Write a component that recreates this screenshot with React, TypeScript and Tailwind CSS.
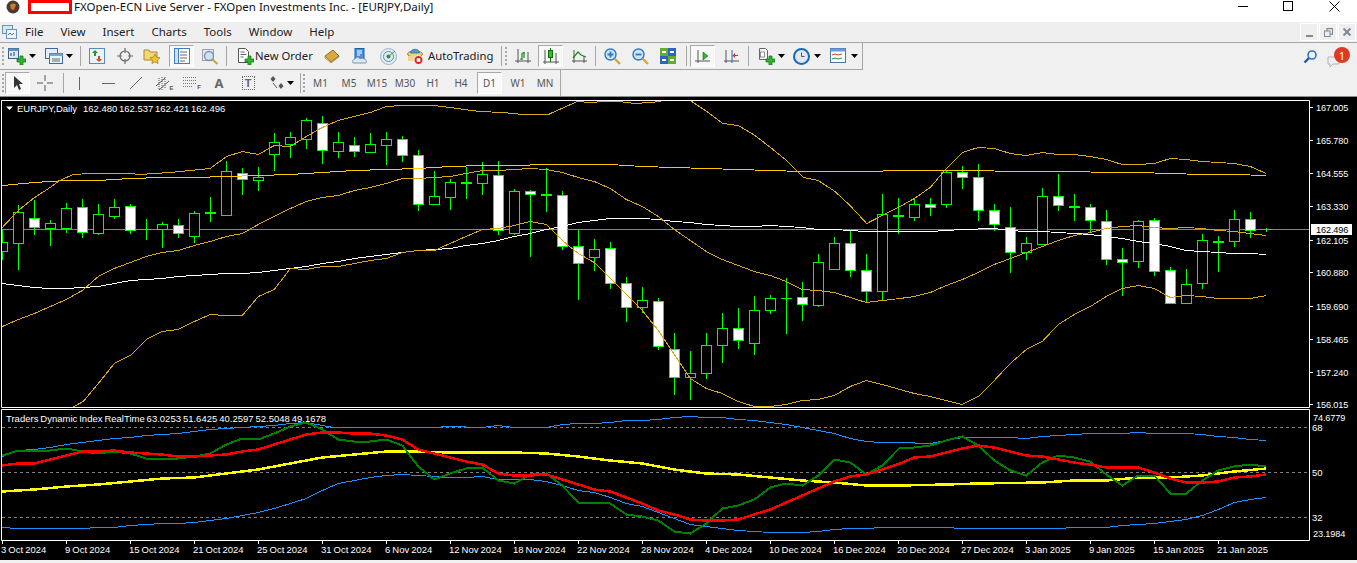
import React from 'react'

// hi, lo, bodyTop, bodyBottom, filled: read off the 3x crops, real y = 100 + v / 3
const candles: [number, number, number, number, number][] = [
  [388, 480, 425, 452, 0], [316, 510, 337, 428, 0], [300, 405, 355, 380, 1], [360, 438, 370, 383, 0],
  [310, 400, 325, 383, 0], [297, 414, 322, 395, 1], [312, 405, 343, 398, 0], [297, 358, 322, 348, 0],
  [312, 402, 319, 389, 1], [358, 420, 388, 388, 1], [366, 444, 373, 388, 0], [358, 414, 376, 398, 1],
  [334, 430, 340, 407, 0], [291, 366, 337, 339, 1], [184, 348, 214, 344, 0], [205, 285, 220, 236, 1],
  [202, 273, 232, 239, 0], [99, 213, 127, 161, 0], [96, 174, 112, 131, 0], [55, 148, 61, 116, 0],
  [48, 192, 70, 149, 1], [96, 174, 127, 152, 0], [111, 171, 136, 152, 1], [99, 156, 133, 155, 0],
  [96, 195, 118, 136, 0], [108, 186, 118, 166, 1], [151, 333, 166, 311, 1], [213, 316, 289, 311, 0],
  [238, 330, 247, 290, 0], [200, 297, 247, 250, 1], [186, 285, 223, 250, 0], [183, 405, 226, 391, 1],
  [267, 405, 274, 398, 0], [270, 470, 274, 281, 1], [205, 336, 281, 284, 1], [273, 450, 286, 439, 1],
  [390, 600, 439, 490, 1], [418, 513, 448, 470, 0], [427, 567, 445, 550, 1], [531, 665, 550, 622, 1],
  [561, 640, 601, 622, 0], [595, 750, 604, 739, 1], [700, 885, 748, 832, 1], [754, 900, 820, 830, 0],
  [700, 837, 736, 820, 0], [640, 789, 685, 736, 0], [625, 747, 685, 721, 1], [589, 765, 631, 730, 0],
  [586, 642, 595, 631, 0], [534, 702, 595, 595, 1], [547, 663, 592, 613, 1], [463, 621, 487, 616, 0],
  [411, 508, 430, 508, 0], [392, 531, 430, 511, 1], [463, 607, 511, 574, 1], [283, 602, 343, 574, 0],
  [295, 402, 346, 349, 1], [295, 363, 313, 352, 0], [295, 348, 313, 320, 1], [211, 323, 216, 313, 0],
  [198, 267, 217, 232, 1], [192, 363, 232, 331, 1], [313, 393, 331, 373, 1], [322, 519, 382, 457, 1],
  [411, 480, 430, 457, 0], [265, 436, 289, 433, 0], [222, 333, 289, 316, 1], [283, 363, 319, 322, 1],
  [313, 398, 322, 361, 1], [331, 495, 364, 478, 1], [445, 588, 478, 487, 1], [361, 504, 364, 484, 0],
  [355, 528, 361, 514, 1], [502, 610, 511, 610, 1], [507, 613, 553, 610, 0], [403, 567, 421, 550, 0],
  [409, 516, 424, 427, 1], [331, 441, 358, 424, 0], [337, 414, 358, 391, 1], [385, 396, 388, 388, 1],
]

// flat x,y lists in crop coordinates, one list per crop. y sits on a pixel centre so flat runs stay visible
const path = (oy: number, parts: [number, number[]][]) => {
  const out: string[] = []
  parts.forEach(([ox, arr]) => {
    for (let i = 0; i < arr.length; i += 2) out.push(`${(ox + arr[i] / 3).toFixed(1)},${Math.floor(oy + arr[i + 1] / 3) + 0.5}`)
  })
  return out.join(' ')
}

const bbUpper = path(100, [
  [0, [7, 383, 55, 330, 100, 295, 150, 262, 175, 245, 199, 232, 220, 222, 270, 220, 390, 220, 420, 224, 510, 216, 630, 205, 680, 170, 727, 154, 775, 163, 823, 137, 871, 140, 919, 110, 967, 82, 1015, 60, 1063, 50, 1111, 38, 1159, 18, 1207, 16, 1303, 16]],
  [450, [0, 23, 88, 33, 160, 37, 220, 43, 295, 43, 355, 15, 382, 4, 420, 8, 460, 5, 505, 5, 555, 9, 600, 6, 630, 3, 680, -20, 725, 3, 770, 35, 818, 69, 865, 77, 915, 105, 965, 145, 1010, 180, 1060, 231, 1105, 240, 1155, 275, 1200, 315, 1250, 370, 1297, 345]],
  [900, [0, 320, 43, 295, 91, 262, 139, 205, 187, 158, 235, 142, 283, 145, 331, 160, 379, 166, 427, 157, 475, 163, 523, 163, 571, 170, 619, 177, 667, 193, 715, 193, 763, 189, 811, 175, 859, 178, 907, 184, 955, 186, 1003, 190, 1051, 198, 1099, 221]],
])
const bbMid = path(100, [
  [0, [7, 678, 55, 657, 103, 640, 151, 620, 199, 598, 247, 570, 295, 530, 343, 505, 391, 488, 439, 470, 487, 457, 535, 450, 583, 436, 631, 424, 679, 408, 727, 400, 775, 372, 823, 350, 871, 325, 919, 305, 967, 293, 1015, 285, 1063, 270, 1111, 262, 1159, 250, 1207, 236, 1255, 235, 1303, 232]],
  [450, [0, 228, 48, 220, 97, 212, 145, 210, 193, 207, 241, 205, 289, 208, 337, 218, 385, 232, 433, 245, 481, 266, 529, 298, 577, 320, 625, 350, 673, 388, 721, 422, 769, 453, 817, 478, 865, 497, 913, 514, 961, 526, 1009, 545, 1057, 567, 1105, 572, 1153, 578, 1201, 592, 1249, 607, 1297, 600]],
  [900, [0, 595, 43, 588, 91, 577, 139, 555, 187, 537, 235, 518, 283, 493, 331, 475, 379, 458, 427, 440, 475, 420, 523, 405, 571, 397, 619, 386, 667, 380, 715, 377, 763, 381, 811, 384, 859, 382, 907, 386, 955, 390, 1003, 393, 1051, 399, 1099, 406]],
])
const bbLower = path(100, [
  [0, [190, 940, 222, 920, 250, 905, 295, 850, 343, 790, 391, 765, 439, 717, 487, 695, 535, 688, 583, 665, 631, 643, 679, 646, 727, 646, 775, 590, 823, 568, 871, 505, 919, 508, 967, 499, 1015, 498, 1063, 490, 1111, 480, 1159, 476, 1207, 456, 1255, 452, 1303, 450]],
  [450, [0, 430, 48, 410, 97, 388, 145, 385, 193, 375, 241, 364, 289, 372, 337, 420, 385, 460, 433, 488, 481, 535, 529, 582, 577, 630, 625, 690, 673, 762, 721, 835, 769, 865, 817, 880, 865, 905, 913, 918, 961, 918, 1009, 912, 1057, 902, 1105, 897, 1153, 885, 1201, 860, 1249, 841, 1297, 852]],
  [900, [0, 868, 43, 880, 91, 888, 139, 902, 187, 913, 235, 890, 283, 840, 331, 790, 379, 748, 427, 723, 475, 672, 523, 644, 571, 618, 619, 590, 667, 566, 715, 555, 763, 566, 811, 592, 859, 586, 907, 590, 955, 595, 1003, 595, 1051, 595, 1099, 586]],
])
const maWhite = path(100, [
  [0, [7, 550, 55, 556, 103, 563, 151, 566, 199, 566, 247, 563, 295, 560, 343, 550, 391, 541, 439, 538, 487, 535, 535, 529, 583, 526, 631, 523, 679, 521, 727, 520, 775, 516, 823, 511, 871, 506, 919, 498, 967, 490, 1015, 484, 1063, 476, 1111, 468, 1159, 462, 1207, 456, 1255, 451, 1303, 448]],
  [450, [0, 445, 48, 436, 97, 430, 145, 421, 193, 410, 241, 400, 289, 388, 337, 378, 385, 368, 433, 360, 481, 356, 529, 355, 577, 355, 625, 358, 673, 364, 721, 367, 769, 372, 817, 376, 865, 379, 913, 379, 961, 376, 1009, 379, 1057, 382, 1105, 388, 1153, 388, 1201, 391, 1249, 394]],
  [900, [0, 394, 91, 394, 139, 391, 187, 388, 283, 385, 331, 391, 379, 394, 427, 394, 475, 397, 523, 400, 571, 403, 619, 409, 667, 415, 715, 423, 763, 430, 811, 440, 859, 451, 907, 454, 955, 457, 1003, 460, 1051, 460, 1099, 463]],
])
const maGold = path(100, [
  [0, [7, 257, 103, 248, 199, 242, 295, 240, 391, 235, 487, 233, 583, 231, 679, 229, 775, 226, 871, 223, 967, 218, 1063, 212, 1159, 208, 1255, 205]],
  [450, [0, 199, 97, 197, 193, 195, 289, 194, 385, 194, 481, 194, 577, 198, 673, 203, 769, 206, 865, 209, 961, 212, 1057, 214, 1153, 213, 1249, 213]],
  [900, [0, 212, 235, 212, 331, 214, 523, 215, 619, 217, 715, 217, 811, 220, 907, 223, 1003, 224, 1099, 227]],
])

const tdiBlueUp = path(405, [
  [0, [7, 153, 55, 137, 103, 133, 151, 126, 199, 118, 247, 112, 295, 105, 343, 100, 391, 96, 439, 92, 487, 88, 535, 84, 583, 80, 631, 74, 679, 70, 727, 67, 775, 65, 823, 60, 871, 55, 919, 52, 967, 60, 1000, 67, 1300, 66]],
  [450, [0, 65, 96, 67, 145, 62, 193, 66, 289, 66, 337, 59, 385, 56, 433, 55, 481, 52, 529, 46, 577, 45, 625, 43, 673, 37, 721, 34, 769, 37, 817, 38, 865, 43, 913, 46, 961, 52, 1009, 59, 1057, 68, 1105, 77, 1153, 86, 1201, 100, 1249, 109, 1297, 112]],
  [900, [0, 113, 91, 116, 139, 106, 187, 98, 283, 98, 331, 97, 379, 100, 427, 95, 475, 90, 523, 87, 571, 85, 667, 85, 715, 82, 763, 85, 859, 85, 907, 88, 955, 94, 1003, 98, 1051, 104, 1099, 106]],
])
const tdiBlueDn = path(405, [
  [0, [7, 368, 55, 371, 247, 371, 295, 368, 343, 367, 391, 361, 439, 358, 487, 356, 535, 355, 583, 351, 631, 346, 679, 340, 727, 331, 775, 323, 823, 310, 871, 295, 919, 280, 967, 255, 1015, 234, 1063, 226, 1111, 217, 1159, 211, 1207, 208, 1255, 211, 1303, 215]],
  [450, [0, 217, 48, 218, 97, 214, 145, 222, 193, 222, 241, 223, 289, 230, 337, 240, 385, 256, 433, 263, 481, 277, 529, 295, 577, 305, 625, 322, 673, 340, 721, 358, 769, 365, 817, 370, 865, 376, 913, 380, 961, 382, 1057, 382, 1105, 380, 1153, 374, 1201, 371, 1249, 371, 1297, 368]],
  [900, [0, 367, 139, 367, 187, 370, 475, 370, 523, 367, 619, 367, 667, 361, 715, 358, 763, 355, 811, 349, 859, 343, 907, 331, 955, 313, 1003, 292, 1051, 282, 1099, 277]],
])
const tdiGreen = path(405, [
  [0, [7, 150, 55, 135, 103, 135, 151, 137, 199, 131, 247, 140, 295, 146, 343, 139, 391, 146, 439, 161, 487, 161, 535, 161, 583, 155, 631, 146, 679, 117, 727, 101, 775, 104, 823, 85, 871, 63, 919, 53, 967, 74, 1015, 103, 1063, 110, 1111, 110, 1159, 104, 1207, 120, 1255, 185, 1303, 222]],
  [450, [0, 205, 48, 191, 97, 188, 145, 226, 193, 236, 241, 208, 289, 205, 337, 240, 385, 293, 433, 293, 481, 296, 529, 329, 577, 333, 625, 346, 673, 379, 721, 386, 769, 355, 817, 310, 865, 301, 913, 283, 961, 247, 1009, 236, 1057, 240, 1105, 212, 1153, 164, 1201, 171, 1249, 208, 1297, 180]],
  [900, [0, 128, 43, 128, 91, 122, 139, 105, 187, 93, 235, 122, 283, 165, 331, 197, 379, 210, 427, 172, 475, 152, 523, 156, 571, 168, 619, 207, 667, 240, 715, 211, 763, 211, 811, 266, 859, 266, 907, 226, 955, 196, 1003, 183, 1051, 179, 1099, 183]],
])
const tdiRed = path(405, [
  [0, [7, 180, 55, 176, 103, 176, 151, 163, 199, 150, 247, 138, 295, 138, 343, 137, 391, 143, 439, 146, 487, 148, 535, 153, 583, 153, 631, 152, 679, 147, 727, 138, 775, 132, 823, 118, 871, 103, 919, 87, 967, 83, 1015, 83, 1063, 84, 1111, 85, 1159, 91, 1207, 102, 1255, 132, 1303, 145]],
  [450, [0, 156, 48, 168, 97, 177, 145, 205, 193, 212, 241, 210, 289, 209, 337, 222, 385, 238, 433, 254, 481, 259, 529, 276, 577, 294, 625, 315, 673, 329, 721, 344, 769, 347, 817, 345, 865, 343, 913, 329, 961, 312, 1009, 293, 1057, 272, 1105, 251, 1153, 230, 1201, 214, 1249, 208, 1297, 194]],
  [900, [0, 176, 43, 158, 91, 153, 139, 143, 187, 130, 235, 122, 283, 128, 331, 139, 379, 151, 427, 154, 475, 163, 523, 172, 571, 177, 619, 187, 667, 188, 715, 188, 763, 202, 811, 221, 859, 233, 907, 233, 955, 229, 1003, 216, 1051, 215, 1099, 209]],
])
const tdiYellow = path(405, [
  [0, [7, 258, 103, 254, 199, 244, 295, 238, 391, 229, 487, 220, 583, 217, 679, 205, 775, 193, 871, 175, 967, 158, 1063, 148, 1159, 138, 1255, 138]],
  [450, [0, 141, 193, 143, 289, 145, 385, 154, 481, 167, 577, 176, 673, 192, 769, 204, 865, 209, 961, 218, 1057, 226, 1153, 232, 1249, 240]],
  [900, [0, 240, 139, 237, 235, 234, 427, 232, 523, 227, 619, 225, 715, 218, 811, 216, 907, 212, 1003, 200, 1099, 191]],
])

const prices: [string, number][] = [
  ['167.005', 107], ['165.780', 140], ['164.555', 173], ['163.330', 206], ['162.105', 240],
  ['160.880', 272], ['159.690', 306], ['158.465', 339], ['157.240', 372], ['156.015', 404],
]
const dates = ['3 Oct 2024', '9 Oct 2024', '15 Oct 2024', '21 Oct 2024', '25 Oct 2024', '31 Oct 2024', '6 Nov 2024', '12 Nov 2024', '18 Nov 2024', '22 Nov 2024', '28 Nov 2024', '4 Dec 2024', '10 Dec 2024', '16 Dec 2024', '20 Dec 2024', '27 Dec 2024', '3 Jan 2025', '9 Jan 2025', '15 Jan 2025', '21 Jan 2025']

const Arrow = () => (
  <svg width="7" height="4" viewBox="0 0 7 4" className="shrink-0"><path d="M0 0h7L3.5 4z" fill="#000" /></svg>
)
const Grip = () => <div className="h-[18px] border-l-2 border-dotted border-[#a8a8a8]" />
const Sep = () => <div className="h-[20px] w-px bg-[#a6a6a6]" />

const Tool = ({ w, children }: { w: string; children?: React.ReactNode }) => (
  <div className={`${w} h-full flex items-center justify-center shrink-0`}>{children}</div>
)
const Pressed = ({ children }: { children: React.ReactNode }) => (
  <div className="w-[25px] h-[22px] flex items-center justify-center bg-[#f8f8f8] border border-t-[#a8a8a8] border-l-[#a8a8a8] border-r-white border-b-white">{children}</div>
)

// toolbar icons
const Plus = () => <path d="M9 12h3V9h3v3h3v3h-3v3h-3v-3H9z" fill="#2fb52f" stroke="#0d6b0d" strokeWidth="0.7" />
const NewChart = () => (
  <svg width="18" height="18" viewBox="0 0 18 18"><rect x="0.5" y="1.5" width="10" height="10" fill="#dbe8f6" stroke="#3f5f8a" /><rect x="0.5" y="1.5" width="10" height="2.5" fill="#5f8fc8" /><path d="M3 9V6M6 9V5" stroke="#345" /><Plus /></svg>
)
const Profiles = () => (
  <svg width="18" height="18" viewBox="0 0 18 18"><rect x="0.5" y="1.5" width="12" height="10" fill="#e4eef9" stroke="#3f6a9e" /><rect x="4.5" y="6.5" width="13" height="10" fill="#eef4fb" stroke="#3f6a9e" /><rect x="4.5" y="6.5" width="13" height="2.5" fill="#7aa3d4" /><path d="M7 12h8M7 14h8" stroke="#345" strokeWidth="0.8" /></svg>
)
const MarketWatch = () => (
  <svg width="16" height="16" viewBox="0 0 16 16"><rect x="0.5" y="0.5" width="15" height="15" fill="#eaf2fb" stroke="#5a8ac0" /><path d="M6 2 3 5h2v3h2V5h2z" fill="#1f9a2c" /><path d="M10 14l3-3h-2V8H9v3H7z" fill="#d84a1f" /></svg>
)
const DataWindow = () => (
  <svg width="16" height="16" viewBox="0 0 16 16" fill="none" stroke="#6a6a6a" strokeWidth="1.2"><circle cx="8" cy="8" r="5" /><path d="M8 0v5M8 11v5M0 8h5M11 8h5" /></svg>
)
const Navigator = () => (
  <svg width="18" height="18" viewBox="0 0 18 18"><path d="M1 3h5l1 2h7v8H1z" fill="#f5d676" stroke="#a9892c" /><path d="M12 7l1.6 3.2 3.4.5-2.5 2.4.6 3.4-3.1-1.6-3.1 1.6.6-3.4L7 10.700l3.400-.5z" fill="#f3c430" stroke="#9a7a18" strokeWidth="0.7" /></svg>
)
const Terminal = () => (
  <svg width="16" height="16" viewBox="0 0 16 16"><rect x="0.5" y="0.5" width="15" height="15" fill="#fff" stroke="#3f7ec2" /><rect x="0.5" y="0.5" width="4" height="15" fill="#cfe2f6" stroke="#3f7ec2" /><path d="M6 4h7M6 7h7M6 10h7M6 13h5" stroke="#667" /></svg>
)
const Tester = () => (
  <svg width="18" height="18" viewBox="0 0 18 18" fill="none"><rect x="1.500" y="2.500" width="11" height="11" fill="#e6e9ee" stroke="#9aa3ad" /><circle cx="8" cy="9" r="4.500" fill="#cfe3f5" stroke="#7d8fa3" strokeWidth="1.300" /><path d="M11.500 12.500l5 4.500" stroke="#c9a43a" strokeWidth="2" /></svg>
)
const NewOrder = () => (
  <svg width="18" height="18" viewBox="0 0 18 18"><path d="M2.500 1.500h7l3 3v11h-10z" fill="#fff" stroke="#555" /><path d="M4.500 5h4M4.500 7.500h6M4.500 10h3" stroke="#667" /><Plus /></svg>
)
const Book = () => (
  <svg width="16" height="16" viewBox="0 0 16 16"><path d="M1 8 9 2l6 6-8 6z" fill="#d9a93f" stroke="#8a6a20" /><path d="M1 8v2l6 5 8-6V8l-8 6z" fill="#f0dfae" stroke="#8a6a20" strokeWidth="0.6" /></svg>
)
const Cloud = () => (
  <svg width="16" height="16" viewBox="0 0 16 16"><rect x="3" y="0.500" width="9" height="10" fill="#4a90d8" stroke="#1f5fa8" /><path d="M5 3h5M5 5h5M5 7h3" stroke="#fff" /><path d="M1 15c-1-2 0-4 2-4 1-2 4-2 5 0 1-1 3-1 4 0 2 0 3 2 2 4z" fill="#dce8f3" stroke="#7c97b3" /></svg>
)
const Radar = () => (
  <svg width="17" height="17" viewBox="0 0 17 17" fill="none"><circle cx="8.500" cy="8.500" r="8" fill="#dfeaf3" stroke="#9fb4c6" /><circle cx="8.500" cy="8.500" r="5" stroke="#5f93bd" /><circle cx="8.500" cy="8.500" r="2" fill="#2d8f3a" /><path d="M8.500 8.500 15 3" stroke="#3aa04a" /></svg>
)
const AutoTradingIcon = () => (
  <svg width="16" height="17" viewBox="0 0 16 17"><ellipse cx="8" cy="6" rx="7.500" ry="3" fill="#f2d37a" stroke="#a2802c" /><path d="M3.500 5c0-5 9-5 9 0z" fill="#4f9ad6" stroke="#27679e" strokeWidth="0.7" /><path d="M1 8h10v5H1z" fill="#f4d68a" /><circle cx="11.500" cy="12" r="4.500" fill="#d8241c" stroke="#fff" /><rect x="9.700" y="10.200" width="3.600" height="3.600" fill="#fff" /></svg>
)
const BarIcon = () => (
  <svg width="16" height="16" viewBox="0 0 16 16" fill="none"><path d="M3 1v14M0 13h16M13 4v11" stroke="#555" /><path d="M7 12V5M7 11H5M7 5h3M9 4v6" stroke="#1c8a1c" strokeWidth="1.200" /></svg>
)
const CandleIcon = () => (
  <svg width="16" height="18" viewBox="0 0 16 18" fill="none"><path d="M2 3v14M0 15h16M13 6v11" stroke="#555" /><path d="M7.500 1v14" stroke="#116b11" /><rect x="5.500" y="3.500" width="4" height="7" fill="#28c428" stroke="#116b11" /></svg>
)
const LineIcon = () => (
  <svg width="15" height="16" viewBox="0 0 15 16" fill="none"><path d="M2 2v13M0 13h15M12 8v7" stroke="#555" /><path d="M1 10l5-6 3 3 5 2" stroke="#1c8a1c" strokeWidth="1.200" /></svg>
)
const Zoom = ({ plus }: { plus?: boolean }) => (
  <svg width="17" height="17" viewBox="0 0 17 17" fill="none"><circle cx="6.500" cy="6.500" r="5.500" fill="#cfe4f7" stroke="#2f78bd" strokeWidth="1.400" /><path d={plus ? 'M3.500 6.500h6M6.500 3.500v6' : 'M3.500 6.500h6'} stroke="#2f78bd" strokeWidth="1.800" /><path d="M10.500 10.500l5.500 5.500" stroke="#cfa93f" strokeWidth="2.400" /></svg>
)
const Tile = () => (
  <svg width="16" height="16" viewBox="0 0 16 16"><rect y="0" width="8" height="8" fill="#5fae2e" /><rect x="8" y="0" width="8" height="8" fill="#2f62c2" /><rect y="8" width="8" height="8" fill="#2f62c2" /><rect x="8" y="8" width="8" height="8" fill="#5fae2e" /><path d="M2 3h4v2H2zM10 3h4v2h-4zM2 11h4v2H2zM10 11h4v2h-4z" fill="#fff" /></svg>
)
const AutoScroll = () => (
  <svg width="15" height="16" viewBox="0 0 15 16" fill="none"><path d="M3 2v13M0 13h15" stroke="#555" /><path d="M8 4l5 4-5 4z" fill="#37b537" stroke="#116b11" strokeWidth="0.6" /></svg>
)
const ChartShift = () => (
  <svg width="15" height="16" viewBox="0 0 15 16" fill="none"><path d="M2 2v13M0 13h15" stroke="#555" /><path d="M8 2v13" stroke="#2a62b8" /><path d="M14 7H11V5L8.500 7.500 11 10V8h3z" fill="#c8331e" /></svg>
)
const Indicators = () => (
  <svg width="18" height="18" viewBox="0 0 18 18"><path d="M2.500 1.500h6l2 2v9h-8z" fill="#f3f3f3" stroke="#666" /><rect x="3.500" y="5" width="4" height="5" fill="#fff" stroke="#666" strokeWidth="0.7" /><Plus /></svg>
)
const Clock = () => (
  <svg width="17" height="17" viewBox="0 0 17 17" fill="none"><circle cx="8.500" cy="8.500" r="7.500" fill="#dfe8f2" stroke="#1668b8" strokeWidth="2" /><path d="M8.500 4.500v4h3" stroke="#555" /></svg>
)
const Template = () => (
  <svg width="16" height="16" viewBox="0 0 16 16" fill="none"><rect x="0.500" y="0.500" width="15" height="14" fill="#fff" stroke="#4a74a8" /><rect x="0.500" y="0.500" width="15" height="3" fill="#6f9ad0" /><path d="M2 7l3-1 3 1 4-1" stroke="#c9402a" /><path d="M2 11l3-1 3 1 4-1" stroke="#2d8f3a" /></svg>
)
const Cursor = () => (
  <svg width="12" height="16" viewBox="0 0 12 16"><path d="M2 1v12l3-3 2 5 2-1-2-5h4z" fill="#333" /></svg>
)
const Cross = () => (
  <svg width="16" height="16" viewBox="0 0 16 16" stroke="#555"><path d="M8 0v6M8 10v6M0 8h6M10 8h6" /></svg>
)
const VLine = () => <div className="w-px h-[13px] bg-[#666]" />
const HLine = () => <div className="w-[13px] h-px bg-[#666]" />
const Trend = () => (
  <svg width="14" height="14" viewBox="0 0 14 14" stroke="#666" fill="none"><path d="M1 13 13 1" /></svg>
)
const Channel = () => (
  <div className="flex items-end">
    <svg width="13" height="15" viewBox="0 0 13 15" stroke="#555" fill="none"><path d="M0 10 9 2M3 14 13 5" /><path d="M3 2v12M6 1v13M9 1v12" strokeDasharray="1 1" /></svg>
    <span className="font-['Liberation_Sans',sans-serif] text-[6px] font-bold leading-none text-[#555]">E</span>
  </div>
)
const Fibo = () => (
  <div className="flex items-end">
    <svg width="14" height="14" viewBox="0 0 14 14" stroke="#777" strokeDasharray="1 1"><path d="M0 1.500h14M0 4.500h14M0 7.500h14M0 10.500h10" /></svg>
    <span className="font-['Liberation_Sans',sans-serif] text-[6px] font-bold leading-none text-[#555]">F</span>
  </div>
)
const TextBox = () => (
  <div className="w-[13px] h-[14px] flex items-center justify-center border border-dotted border-[#666] font-['Liberation_Sans',sans-serif] text-[11px] font-bold leading-none text-[#666]">T</div>
)
const Shapes = () => (
  <svg width="14" height="14" viewBox="0 0 14 14" fill="#555"><path d="M3 0l2.500 3L3 6 .5 3z" /><path d="M11 7l2.500 3L11 13 8.500 10z" /><path d="M3 7l4 5" stroke="#555" fill="none" /></svg>
)

const labelFont = "'Liberation Sans', sans-serif"
const uiFont = "font-['Noto_Sans','Liberation_Sans',sans-serif]"

const Chart = () => (
  <svg width="1357" height="463" viewBox="0 97 1357 463" className="block" fontFamily={labelFont} fontSize="9.5">
    <defs>
      <clipPath id="mainPane"><rect x="2" y="101" width="1307" height="306" /></clipPath>
      <clipPath id="tdiPane"><rect x="2" y="410" width="1307" height="130" /></clipPath>
    </defs>
    <rect x="0" y="97" width="1357" height="463" fill="#000" />

    <g clipPath="url(#mainPane)">
      <rect x="2" y="229" width="1307" height="1" fill="#808890" />
      {candles.map(([hi, lo, top, bot, filled], i) => {
        const cx = 2 + 16 * i
        const y = (v: number) => Math.round(100 + v / 3)
        const t = y(top)
        const b = Math.max(y(bot), t)
        return (
          <g key={i}>
            <rect x={cx} y={y(hi)} width="1" height={y(lo) - y(hi)} fill="#00ff00" />
            <rect x={cx - 5} y={t} width="11" height={b - t + 1} fill="#00ff00" />
            {b - t > 1 && <rect x={cx - 4} y={t + 1} width="9" height={b - t - 1} fill={filled ? '#fff' : '#000'} />}
          </g>
        )
      })}
      <g fill="none" shapeRendering="crispEdges">
        <polyline points={maGold} stroke="#ffc800" strokeWidth="1" />
        <polyline points={maWhite} stroke="#fff" strokeWidth="1" />
        <polyline points={bbUpper} stroke="#daa520" strokeWidth="1" />
        <polyline points={bbMid} stroke="#daa520" strokeWidth="1" />
        <polyline points={bbLower} stroke="#daa520" strokeWidth="1" />
      </g>
    </g>

    <g clipPath="url(#tdiPane)" fill="none">
      <g stroke="#808080" strokeDasharray="3 3">
        <path d="M2 427.500H1309M2 472.500H1309M2 517.500H1309" />
      </g>
      <g shapeRendering="crispEdges">
        <polyline points={tdiBlueUp} stroke="#1e90ff" strokeWidth="1" />
        <polyline points={tdiBlueDn} stroke="#1e90ff" strokeWidth="1" />
        <polyline points={tdiYellow} stroke="#ffff00" strokeWidth="2.500" />
        <polyline points={tdiGreen} stroke="#008000" strokeWidth="2" />
        <polyline points={tdiRed} stroke="#ff0000" strokeWidth="2.500" />
      </g>
    </g>

    <path d="M1.500 100.500H1309.500V407.500H1.500zM1.500 409.500H1309.500V540.500H1.500z" fill="none" stroke="#fff" />

    <path d="M6 106.500h7l-3.500 3.500z" fill="#fff" />
    <text x="17" y="111.500" fill="#fff">EURJPY,Daily</text>
    <text x="83" y="111.500" fill="#fff" wordSpacing="-1">162.480 162.537 162.421 162.496</text>
    <text x="6" y="422" fill="#fff" wordSpacing="-0.7">Traders Dynamic Index RealTime 63.0253 51.6425 40.2597 52.5048 49.1678</text>

    {prices.map(([p, y]) => (
      <g key={p}>
        <rect x="1310" y={y} width="3" height="1" fill="#fff" />
        <text x="1316" y={y + 3.5} fill="#fff" fontSize="9.200" letterSpacing="-0.15">{p}</text>
      </g>
    ))}
    <rect x="1311" y="224" width="41" height="11" fill="#fff" />
    <text x="1316" y="233" fill="#000" fontSize="9.200" letterSpacing="-0.15">162.496</text>

    <text x="1313" y="420.500" fill="#fff" fontSize="9.200" letterSpacing="-0.15">74.6779</text>
    <text x="1312" y="430.500" fill="#fff">68</text>
    <text x="1312" y="475.500" fill="#fff">50</text>
    <text x="1312" y="520.500" fill="#fff">32</text>
    <text x="1313" y="536.500" fill="#fff" fontSize="9.200" letterSpacing="-0.15">23.1984</text>

    {dates.map((d, i) => (
      <g key={d}>
        <rect x={2 + 64 * i} y="541" width="1" height="3" fill="#fff" />
        <text x={1 + 64 * i} y="552.500" fill="#fff" wordSpacing="-0.6">{d}</text>
      </g>
    ))}
  </svg>
)

const App = () => (
  <div className={`w-[1357px] h-[563px] overflow-hidden bg-[#f0f0f0] text-[#222] ${uiFont}`}>
    {/* window title */}
    <div className="h-[22px] bg-white flex items-start">
      <div className="w-[74px] h-[22px] flex items-start shrink-0">
        <svg width="16" height="16" viewBox="0 0 16 16" className="ml-[5px] mt-[-1px] shrink-0"><circle cx="8" cy="8" r="6.500" fill="#4a3a30" /><path d="M5 6c2-2 5-2 6 0l-2 5-3-1z" fill="#c27a35" /></svg>
        <div className="ml-[7px] w-[44px] h-[14px] border-[3px] border-[#ff0000] bg-white shrink-0" />
      </div>
      <span className="text-[11.500px] leading-[14px] text-[#111]">FXOpen-ECN Live Server - FXOpen Investments Inc. - [EURJPY,Daily]</span>
      <div className="ml-auto flex h-full items-start">
        <div className="w-[45px] h-[12px] flex items-center justify-center"><div className="w-[10px] h-px bg-black" /></div>
        <div className="w-[46px] h-[12px] flex items-center justify-center"><div className="w-[10px] h-[10px] border border-black" /></div>
        <div className="w-[46px] h-[12px] flex items-center justify-center">
          <svg width="11" height="11" viewBox="0 0 11 11" stroke="#000" fill="none"><path d="M.5.500l10 10M10.500.500l-10 10" /></svg>
        </div>
      </div>
    </div>

    {/* menu */}
    <div className="h-[21px] flex items-center border-b border-[#a6a6a6] bg-[#efefef]">
      <svg width="16" height="16" viewBox="0 0 16 16" className="ml-[2px] shrink-0"><rect x="0.500" y="1.500" width="10" height="8" fill="#d6e6f7" stroke="#6a93c4" /><rect x="4.500" y="5.500" width="10" height="9" fill="#eef5fc" stroke="#6a93c4" /><path d="M6 11l2-2 2 2 2-2" stroke="#4a7cb5" fill="none" /></svg>
      <div className="ml-[7px] flex gap-[17px] text-[11.500px] leading-none text-[#222]">
        <span>File</span><span>View</span><span>Insert</span><span>Charts</span><span>Tools</span><span>Window</span><span>Help</span>
      </div>
      <div className="ml-auto flex gap-px mr-[1px]">
        <div className="w-[18px] h-[18px] border border-white flex items-end justify-center pb-[3px]"><div className="w-[7px] h-[2px] bg-[#7d8a99]" /></div>
        <div className="w-[18px] h-[18px] border border-white flex items-center justify-center">
          <svg width="9" height="9" viewBox="0 0 9 9" fill="none" stroke="#7d8a99"><rect x="0.500" y="3" width="5.500" height="5.500" /><path d="M3 3V.7h5.500v5.500H6" strokeWidth="1.200" /></svg>
        </div>
        <div className="w-[18px] h-[18px] border border-white flex items-center justify-center">
          <svg width="8" height="8" viewBox="0 0 8 8" stroke="#7d8a99" strokeWidth="2"><path d="M.5.500l7 7M7.500.500l-7 7" /></svg>
        </div>
      </div>
    </div>

    {/* main toolbar */}
    <div className="h-[27px] flex items-stretch">
      <div className="w-[863px] shrink-0 flex items-center border-b border-r border-[#a6a6a6] text-[11.300px]">
        <Tool w="w-[6px]"><Grip /></Tool>
        <div className="w-[32px] h-full flex items-center gap-[3px] pl-[2px] shrink-0"><NewChart /><Arrow /></div>
        <div className="w-[38px] h-full flex items-center gap-[3px] pl-[7px] shrink-0"><Profiles /><Arrow /></div>
        <Tool w="w-[8px]"><Sep /></Tool>
        <Tool w="w-[26px]"><MarketWatch /></Tool>
        <Tool w="w-[29px]"><DataWindow /></Tool>
        <Tool w="w-[26px]"><Navigator /></Tool>
        <Tool w="w-[33px]"><Pressed><Terminal /></Pressed></Tool>
        <Tool w="w-[24px]"><Tester /></Tool>
        <Tool w="w-[8px]"><Sep /></Tool>
        <div className="w-[89px] h-full flex items-center gap-[1px] pl-[6px] shrink-0 whitespace-nowrap"><NewOrder /><span>New Order</span></div>
        <Tool w="w-[26px]"><Book /></Tool>
        <Tool w="w-[30px]"><Cloud /></Tool>
        <Tool w="w-[26px]"><Radar /></Tool>
        <div className="w-[97px] h-full flex items-center gap-[5px] pl-[6px] shrink-0 whitespace-nowrap"><AutoTradingIcon /><span>AutoTrading</span></div>
        <Tool w="w-[6px]"><Sep /></Tool>
        <Tool w="w-[4px]"><Grip /></Tool>
        <Tool w="w-[30px]"><BarIcon /></Tool>
        <Tool w="w-[25px]"><Pressed><CandleIcon /></Pressed></Tool>
        <Tool w="w-[32px]"><LineIcon /></Tool>
        <Tool w="w-px"><Sep /></Tool>
        <Tool w="w-[32px]"><Zoom plus /></Tool>
        <Tool w="w-[24px]"><Zoom /></Tool>
        <Tool w="w-[32px]"><Tile /></Tool>
        <Tool w="w-[4px]"><Sep /></Tool>
        <Tool w="w-[27px]"><div className="ml-[2px]"><Pressed><AutoScroll /></Pressed></div></Tool>
        <Tool w="w-[32px]"><ChartShift /></Tool>
        <Tool w="w-[2px]"><Sep /></Tool>
        <div className="w-[37px] h-full flex items-center gap-[3px] pl-[8px] shrink-0"><Indicators /><Arrow /></div>
        <div className="w-[37px] h-full flex items-center gap-[4px] pl-[7px] shrink-0"><Clock /><Arrow /></div>
        <div className="w-[39px] h-full flex items-center gap-[5px] pl-[7px] shrink-0"><Template /><Arrow /></div>
      </div>
      <div className="ml-auto flex items-start pt-[6px] pr-[7px] gap-[10px]">
        <svg width="14" height="14" viewBox="0 0 14 14" fill="none" className="mt-[1px]"><circle cx="9" cy="5" r="4" stroke="#2f6fd0" strokeWidth="1.600" fill="#eef4fc" /><path d="M6 8 1.500 12.500" stroke="#2456a8" strokeWidth="2.400" /></svg>
        <div className="relative w-[23px] h-[20px]">
          <svg width="15" height="13" viewBox="0 0 15 13" className="absolute left-0 top-[6px]"><path d="M1 2h11v7H6l-3 3V9H1z" fill="#eee" stroke="#b5b5b5" /></svg>
          <div className="absolute right-0 top-[-2px] w-[16px] h-[16px] rounded-full bg-[#dc3a22] flex items-center justify-center text-white text-[11px] leading-none">1</div>
        </div>
      </div>
    </div>

    {/* line studies + periods */}
    <div className="h-[27px] flex items-stretch border-b border-[#8c8c8c]">
      <div className="w-[561px] shrink-0 flex items-center border-r border-[#a6a6a6] text-[10px] text-[#555]">
        <Tool w="w-[5px]"><Grip /></Tool>
        <Tool w="w-[25px]"><Pressed><Cursor /></Pressed></Tool>
        <Tool w="w-[30px]"><Cross /></Tool>
        <Tool w="w-[6px]"><Sep /></Tool>
        <Tool w="w-[26px]"><VLine /></Tool>
        <Tool w="w-[32px]"><HLine /></Tool>
        <Tool w="w-[24px]"><Trend /></Tool>
        <Tool w="w-[34px]"><Channel /></Tool>
        <Tool w="w-[20px]"><Fibo /></Tool>
        <Tool w="w-[34px]"><span className="text-[13px] font-bold leading-none text-[#666]">A</span></Tool>
        <Tool w="w-[24px]"><TextBox /></Tool>
        <div className="w-[38px] h-full flex items-center gap-[3px] pl-[10px] shrink-0"><Shapes /><Arrow /></div>
        <Tool w="w-[4px]"><Sep /></Tool>
        <Tool w="w-[4px]"><Grip /></Tool>
        <Tool w="w-[29px]">M1</Tool>
        <Tool w="w-[28px]">M5</Tool>
        <Tool w="w-[28px]">M15</Tool>
        <Tool w="w-[28px]">M30</Tool>
        <Tool w="w-[28px]">H1</Tool>
        <Tool w="w-[28px]">H4</Tool>
        <Tool w="w-[29px]"><Pressed>D1</Pressed></Tool>
        <Tool w="w-[28px]">W1</Tool>
        <Tool w="w-[26px]">MN</Tool>
      </div>
    </div>

    <Chart />
  </div>
)

export default App
